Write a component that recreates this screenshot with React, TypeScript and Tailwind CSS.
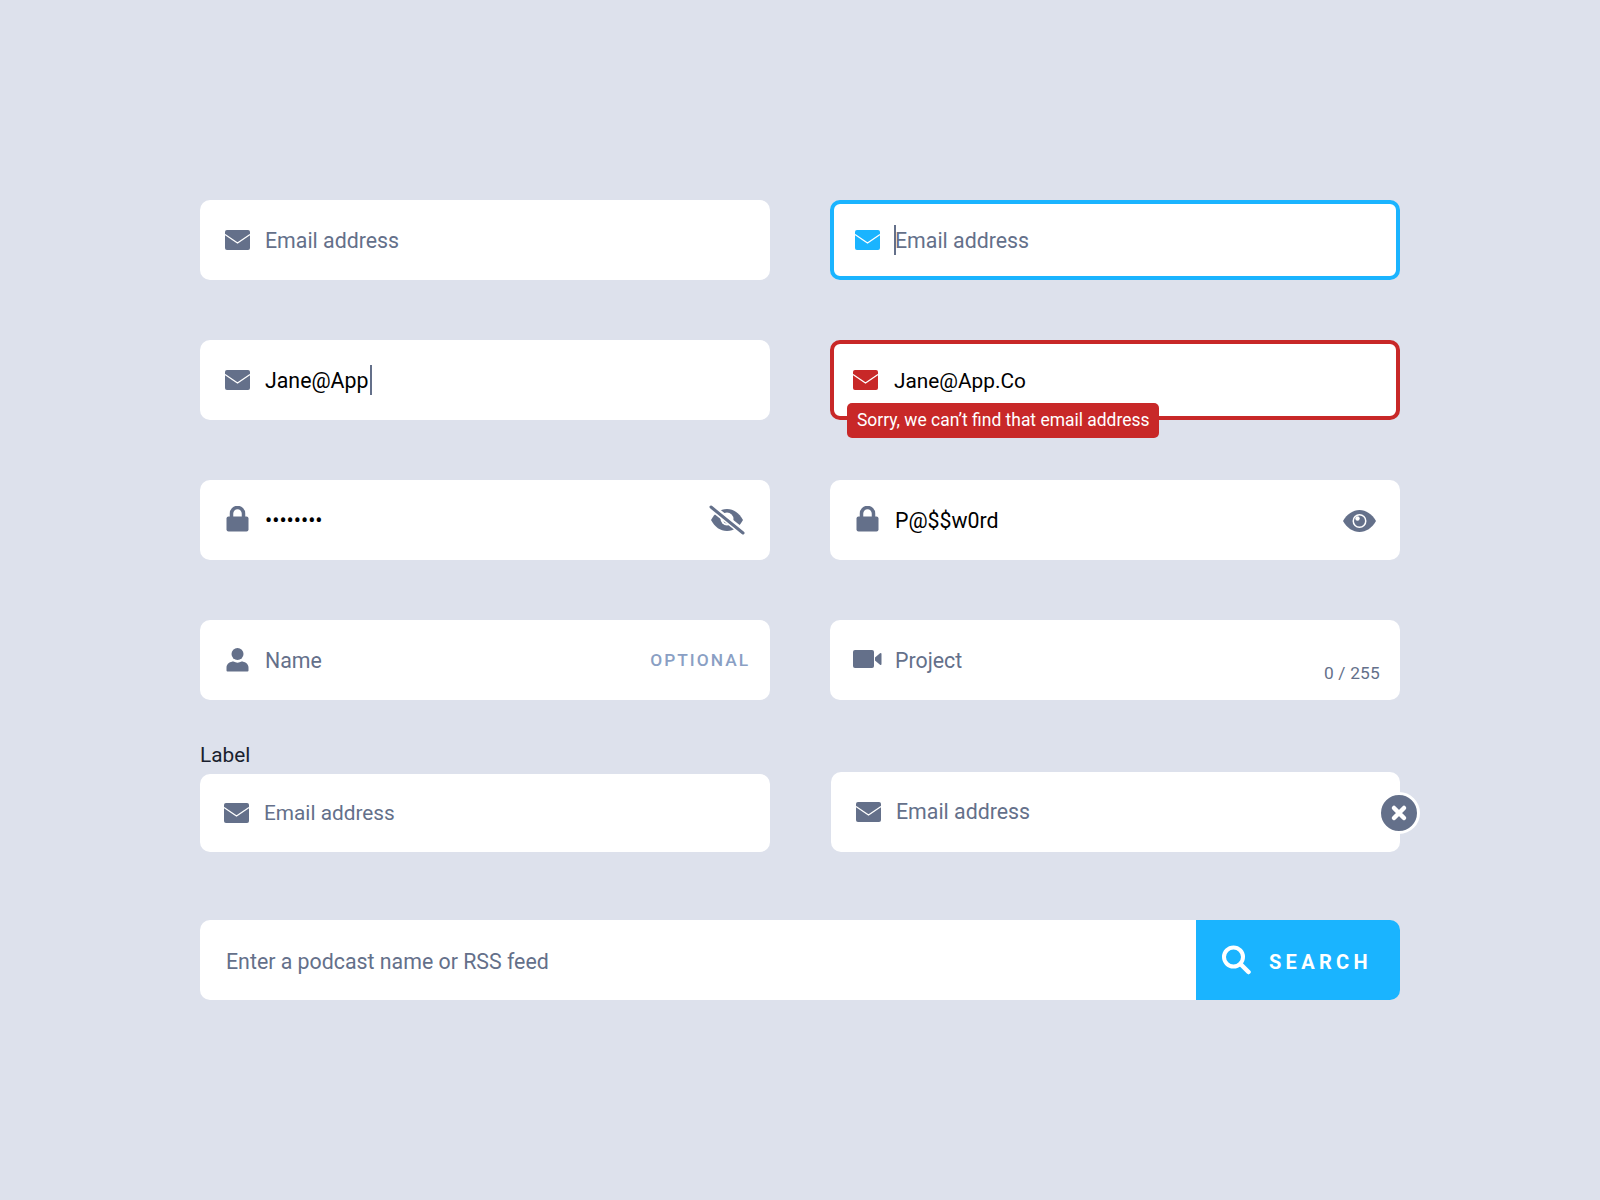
import React from "react";

const Mail = ({ c = "#64708a" }: { c?: string }) => (
  <svg width="25" height="20" viewBox="0 0 25 20" className="shrink-0">
    <rect width="25" height="20" rx="2" fill={c} />
    <path d="M0 4.500 L12.500 13 L25 4.500" fill="none" stroke="#fff" strokeWidth="1.300" />
  </svg>
);
const Lock = () => (
  <svg width="25" height="26" viewBox="0 0 25 26" className="shrink-0 -translate-y-[1px]">
    <path d="M6.500 12V7.500a6 6 0 0 1 12 0V12" fill="none" stroke="#64708a" strokeWidth="3.500" />
    <rect x="1.500" y="10.500" width="22" height="15" rx="2" fill="#64708a" />
  </svg>
);
const Person = () => (
  <svg width="25" height="24" viewBox="0 0 25 24" className="shrink-0">
    <circle cx="12.500" cy="6" r="6" fill="#64708a" />
    <path d="M1.500 22.500v-3c0-4 4-6 7-6 2.500 1.500 5.500 1.500 8 0 3 0 7 2 7 6v3a1 1 0 0 1-1 1h-20a1 1 0 0 1-1-1z" fill="#64708a" />
  </svg>
);
const Video = () => (
  <svg width="29" height="18" viewBox="0 0 29 18" className="shrink-0 -ml-[2px] mr-[-2px] -translate-y-[1px]">
    <rect width="21" height="18" rx="2" fill="#64708a" />
    <path d="M22 7.500 L27 3.200 Q28.500 2.500 28.500 4 V14 Q28.500 15.500 27 14.800 L22 10.500Z" fill="#64708a" />
  </svg>
);
const Eye = () => (
  <svg width="33" height="22" viewBox="0 0 33 22" className="shrink-0 translate-y-[1px]">
    <path d="M0 11C4 4 10 0 16.500 0S29 4 33 11C29 18 23 22 16.500 22S4 18 0 11Z" fill="#64708a" />
    <circle cx="16.500" cy="11" r="7" fill="#fff" />
    <circle cx="16.500" cy="11" r="5.500" fill="#64708a" />
    <circle cx="14.500" cy="8.500" r="2.200" fill="#fff" />
  </svg>
);
const EyeOff = () => (
  <svg width="36" height="30" viewBox="0 0 36 30" className="shrink-0">
    <path d="M2 15C6 8 11 4 18 4S30 8 34 15C30 22 25 26 18 26S6 22 2 15Z" fill="#64708a" />
    <circle cx="18" cy="14" r="6.500" fill="#fff" />
    <circle cx="18" cy="15" r="3.500" fill="#64708a" />
    <path d="M1 1 L35 28" stroke="#fff" strokeWidth="7" />
    <path d="M2 2 L34 28" stroke="#64708a" strokeWidth="3" strokeLinecap="round" />
  </svg>
);
const SearchIcon = () => (
  <svg width="30" height="30" viewBox="0 0 30 30" className="shrink-0 -translate-x-[0.5px]">
    <circle cx="12" cy="12" r="9.500" fill="none" stroke="#fff" strokeWidth="4" />
    <path d="M19.500 19.500 L27 27" stroke="#fff" strokeWidth="4.500" strokeLinecap="round" />
  </svg>
);

const Caret = () => <span className="inline-block w-[2px] h-[30px] bg-[#64708a] shrink-0" />;

const Field = ({ children, className = "" }: { children: React.ReactNode; className?: string }) => (
  <div className={`relative flex items-center w-[570px] h-[80px] bg-white rounded-[10px] ${className}`}>{children}</div>
);
const Placeholder = ({ children, className = "text-[21.33px] translate-y-[0.5px]" }: { children: React.ReactNode; className?: string }) => (
  <span className={`leading-[30px] text-[#64708a] ${className}`}>{children}</span>
);
const Value = ({ children, className = "text-[21.33px]" }: { children: React.ReactNode; className?: string }) => (
  <span className={`leading-[30px] text-black translate-y-[0.5px] ${className}`}>{children}</span>
);

export default function App() {
  return (
    <div className="w-[1600px] h-[1200px] bg-[#dde1ec] pt-[200px] pl-[200px] font-['Roboto',sans-serif]">
      <div className="flex flex-col w-[1200px]">
        <div className="flex gap-[60px]">
          <Field className="pl-[25px] gap-[15px]">
            <Mail />
            <Placeholder>Email address</Placeholder>
          </Field>
          <Field className="pl-[21px] border-[4px] border-[#1ab4ff]">
            <Mail c="#1ab4ff" />
            <span className="ml-[14px] flex items-center">
              <Caret />
              <Placeholder className="text-[21.33px] translate-y-[0.5px] -ml-[1px]">Email address</Placeholder>
            </span>
          </Field>
        </div>
        <div className="flex gap-[60px] mt-[60px]">
          <Field className="pl-[25px] gap-[15px]">
            <Mail />
            <span className="flex items-center">
              <Value>Jane@App</Value>
              <span className="ml-[2px] flex"><Caret /></span>
            </span>
          </Field>
          <Field className="pl-[19px] gap-[16px] border-[4px] border-[#c82828]">
            <Mail c="#c82828" />
            <Value className="text-[20.8px]">Jane@App.Co</Value>
            <div className="absolute left-[13px] top-[59px] h-[35px] px-[10px] flex items-center rounded-[5px] bg-[#c82828] text-white text-[17.45px] whitespace-nowrap">
              Sorry, we can’t find that email address
            </div>
          </Field>
        </div>
        <div className="flex gap-[60px] mt-[60px]">
          <Field className="pl-[25px] pr-[25px] gap-[15px] justify-between">
            <span className="flex items-center gap-[15px]">
              <Lock />
              <span className="text-[21.33px] text-black leading-[30px] translate-y-[1px]">••••••••</span>
            </span>
            <EyeOff />
          </Field>
          <Field className="pl-[25px] pr-[24px] justify-between">
            <span className="flex items-center gap-[15px]">
              <Lock />
              <Value>P@$$w0rd</Value>
            </span>
            <Eye />
          </Field>
        </div>
        <div className="flex gap-[60px] mt-[60px]">
          <Field className="pl-[25px] pr-[20px] justify-between">
            <span className="flex items-center gap-[15px]">
              <Person />
              <Placeholder>Name</Placeholder>
            </span>
            <span className="text-[17.33px] font-medium tracking-[2px] text-[#8a9fc4] translate-y-[1px]">OPTIONAL</span>
          </Field>
          <Field className="pl-[25px] pr-[20px] justify-between">
            <span className="flex items-center gap-[15px]">
              <Video />
              <Placeholder>Project</Placeholder>
            </span>
            <span className="self-end mb-[15px] text-[17.33px] tracking-[0.2px] leading-[24px] text-[#64708a]">0 / 255</span>
          </Field>
        </div>
        <div className="flex gap-[60px] mt-[40px] items-end">
          <div className="flex flex-col">
            <span className="text-[20.8px] leading-[30px] text-[#1a1f2e] mb-[4px]">Label</span>
            <Field className="!h-[78px] pl-[24px] gap-[15px]">
              <Mail />
              <Placeholder className="text-[20.8px]">Email address</Placeholder>
            </Field>
          </div>
          <Field className="!w-[569px] ml-[1px] pl-[25px] gap-[15px]">
            <Mail />
            <Placeholder className="text-[21.33px]">Email address</Placeholder>
            <div className="absolute right-[-20px] top-[20px] w-[42px] h-[42px] rounded-full bg-[#64708a] border-[3px] border-white flex items-center justify-center">
              <svg width="18" height="18" viewBox="0 0 18 18">
                <path d="M4 4 L14 14 M14 4 L4 14" stroke="#fff" strokeWidth="4.500" strokeLinecap="round" />
              </svg>
            </div>
          </Field>
        </div>
        <div className="flex mt-[68px] h-[80px] w-[1200px]">
          <div className="flex-1 bg-white rounded-l-[10px] pl-[26px] flex items-center">
            <Placeholder className="text-[21.33px] translate-y-[1.5px]">Enter a podcast name or RSS feed</Placeholder>
          </div>
          <div className="w-[204px] bg-[#1ab4ff] rounded-r-[10px] pl-[26px] flex items-center gap-[17px]">
            <SearchIcon />
            <span className="text-[20px] font-bold tracking-[4.3px] text-white translate-y-[1.5px]">SEARCH</span>
          </div>
        </div>
      </div>
    </div>
  );
}
